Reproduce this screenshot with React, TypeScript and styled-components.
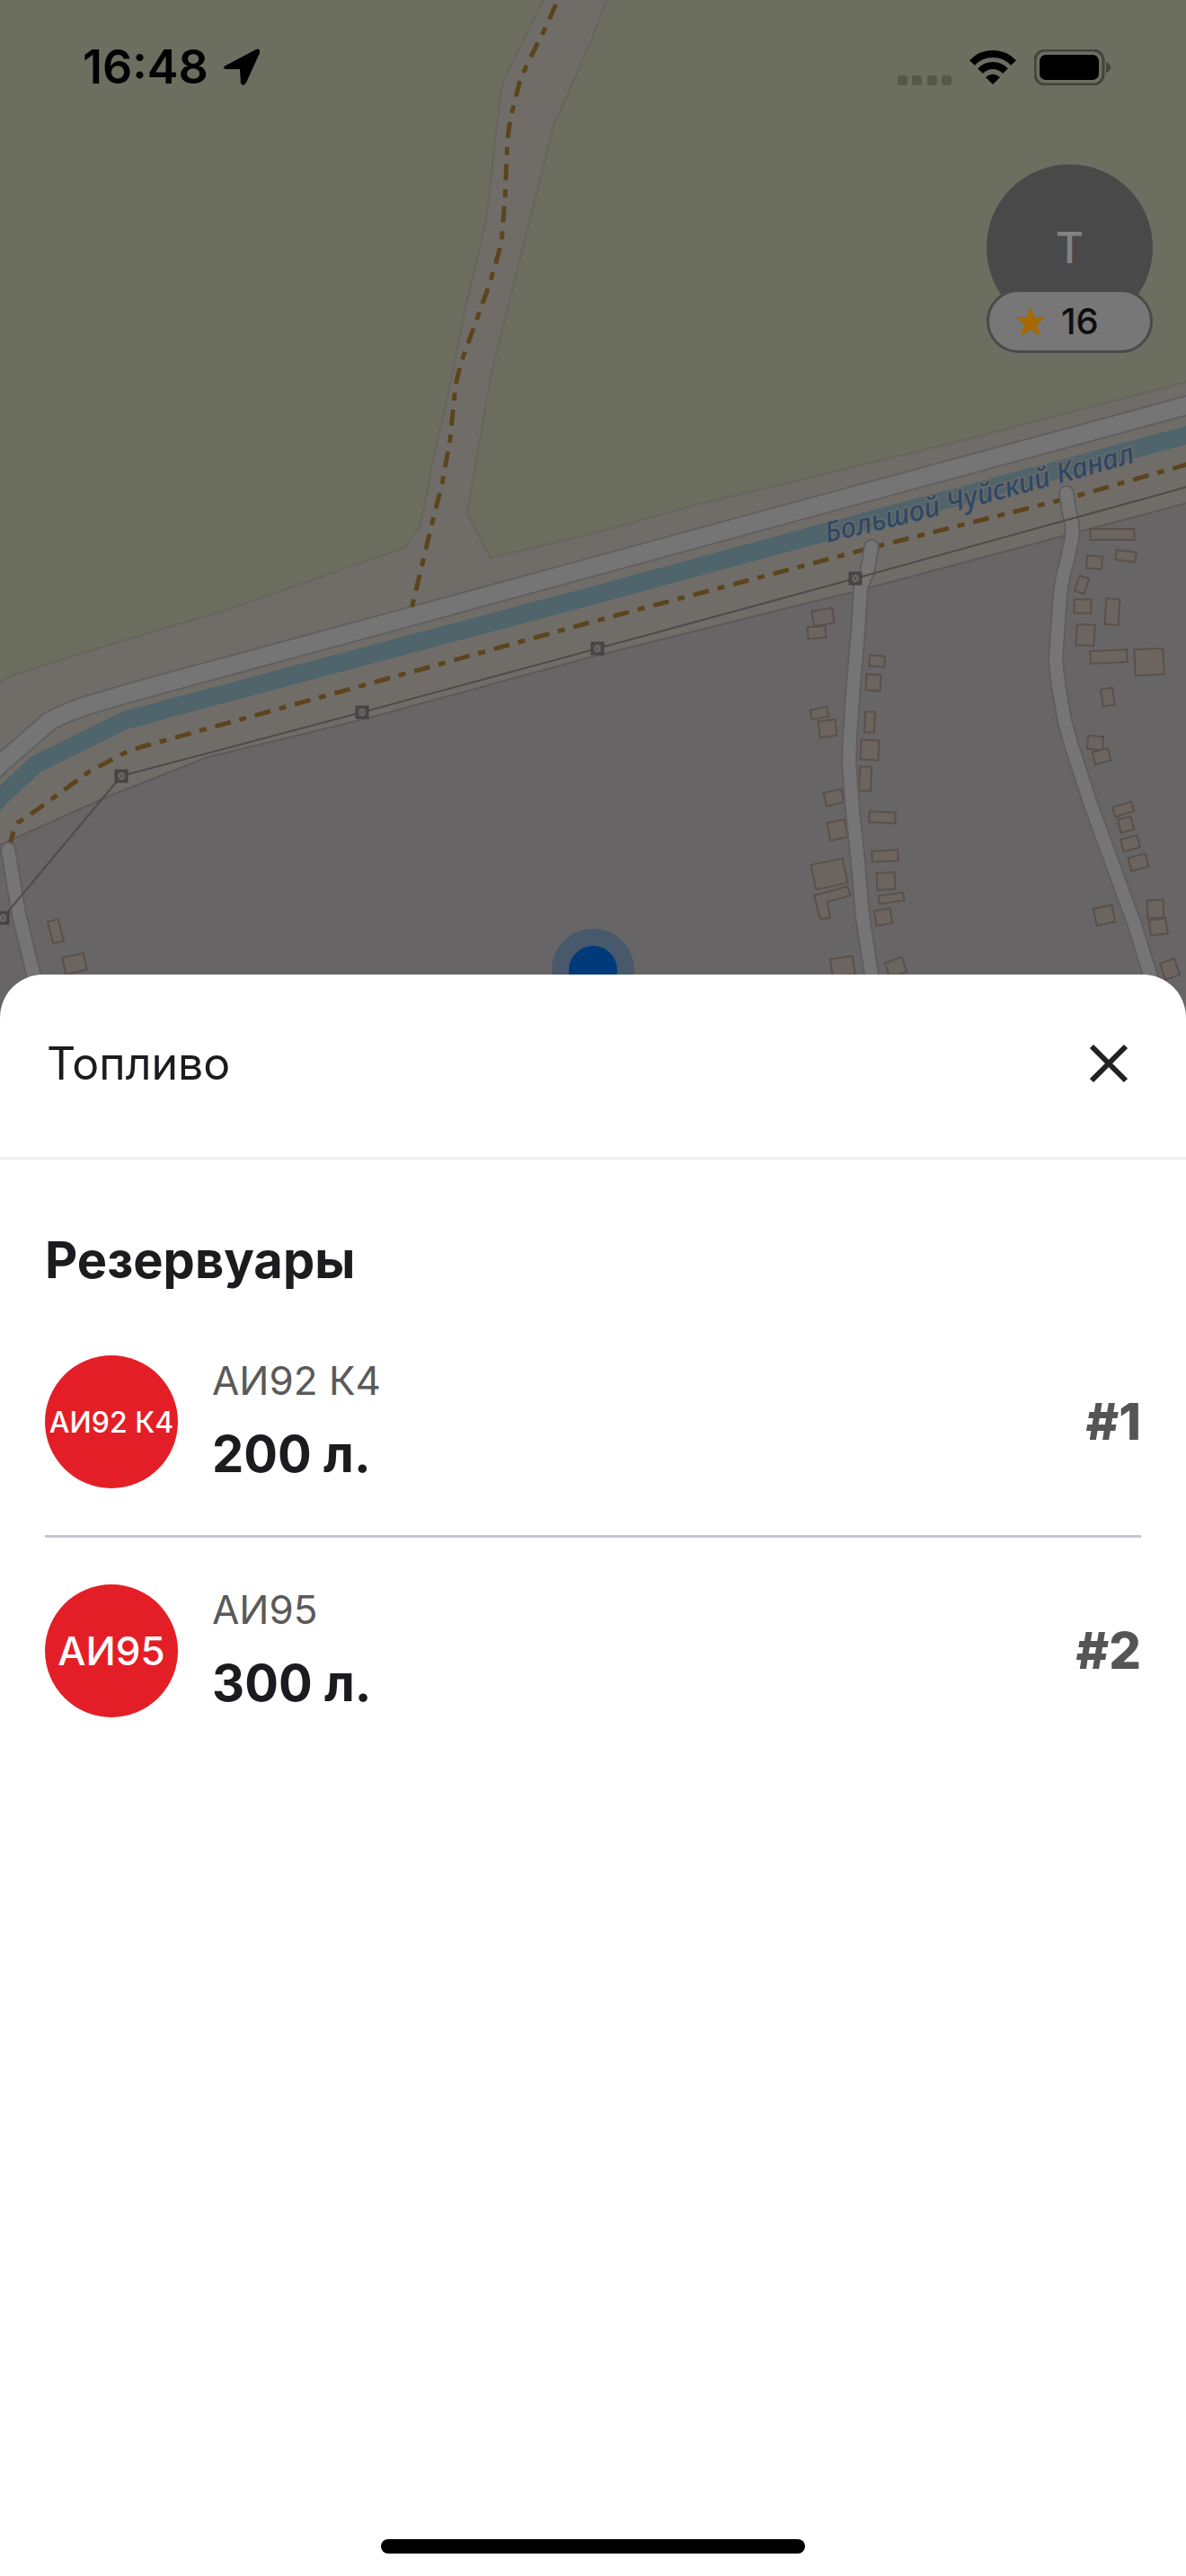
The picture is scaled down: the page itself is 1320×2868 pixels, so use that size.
import React from "react";
import styled, { createGlobalStyle } from "styled-components";

const GlobalStyle = createGlobalStyle`
  *, *::before, *::after { box-sizing: border-box; }
  body {
    margin: 0;
    background: #ffffff;
    font-family: Inter, "Noto Sans", "Liberation Sans", sans-serif;
    color: #1c1b1f;
  }
`;

const Screen = styled.div`
  display: flex;
  flex-direction: column;
  min-height: 100vh;
`;

const MapArea = styled.section`
  position: relative;
  height: 1133px;
  overflow: hidden;
  background: #686566;
`;

const MapCanvas = styled.svg`
  position: absolute;
  inset: 0;
  width: 100%;
  height: 100%;
`;

const Overlay = styled.div`
  position: relative;
  display: flex;
  flex-direction: column;
`;

const StatusBar = styled.header`
  display: flex;
  align-items: center;
  justify-content: space-between;
  height: 150px;
  padding: 0 84px 0 92px;
`;

const StatusGroup = styled.div<{ $gap: number }>`
  display: flex;
  align-items: center;
  gap: ${(p) => p.$gap}px;
`;

const Clock = styled.time`
  font-size: 52px;
  font-weight: 600;
  line-height: 64px;
  color: #000000;
`;

const Profile = styled.button`
  display: flex;
  flex-direction: column;
  align-self: flex-end;
  width: 185px;
  margin: 33px 37px 0 0;
  padding: 0;
  border: 0;
  background: none;
  font-family: inherit;
  cursor: pointer;
`;

const Avatar = styled.span`
  display: flex;
  align-items: center;
  justify-content: center;
  height: 185px;
  border-radius: 50%;
  background: #494949;
  color: #828282;
  font-size: 48px;
  font-weight: 500;
`;

const Rating = styled.span`
  display: flex;
  align-items: center;
  gap: 16px;
  height: 71px;
  margin-top: -46px;
  padding: 0 28px;
  border: 3px solid #4a4a4a;
  border-radius: 36px;
  background: #777777;
  color: #0e0e10;
  font-size: 40px;
  font-weight: 500;
`;

const Sheet = styled.main`
  position: relative;
  display: flex;
  flex: 1;
  flex-direction: column;
  margin-top: -48px;
  border-radius: 48px 48px 0 0;
  background: #ffffff;
`;

const SheetHeader = styled.div`
  display: flex;
  align-items: center;
  justify-content: space-between;
  height: 206px;
  padding: 0 52px 6px;
  border-bottom: 3px solid #f0f0f0;
`;

const SheetTitle = styled.h1`
  margin: 0;
  font-size: 50px;
  font-weight: 400;
  line-height: 64px;
`;

const CloseButton = styled.button`
  display: flex;
  padding: 12px;
  border: 0;
  background: none;
  color: #212121;
  cursor: pointer;
`;

const SheetBody = styled.section`
  flex: 1;
  padding: 76px 50px 0;
`;

const SectionTitle = styled.h2`
  margin: 0 0 18px;
  font-size: 56px;
  font-weight: 700;
  line-height: 72px;
`;

const TankList = styled.ul`
  margin: 0;
  padding: 0;
  list-style: none;
`;

const TankRow = styled.li`
  display: flex;
  align-items: center;
  padding: 50px 0;

  & + & {
    border-top: 3px solid #c8c4ce;
  }
`;

const Badge = styled.span<{ $small?: boolean }>`
  display: flex;
  flex: none;
  align-items: center;
  justify-content: center;
  width: 148px;
  height: 148px;
  margin-right: 38px;
  border-radius: 50%;
  background: #e41e26;
  color: #ffffff;
  font-size: ${(p) => (p.$small ? 32 : 44)}px;
  font-weight: 500;
  white-space: nowrap;
`;

const TankInfo = styled.div`
  display: flex;
  flex: 1;
  flex-direction: column;
  gap: 12px;
`;

const FuelName = styled.span`
  color: #5a5a5a;
  font-size: 44px;
  line-height: 60px;
`;

const Volume = styled.strong`
  font-size: 56px;
  font-weight: 700;
  line-height: 80px;
`;

const TankNumber = styled.span`
  color: #555555;
  font-size: 56px;
  font-weight: 800;
`;

const HomeBar = styled.div`
  align-self: center;
  width: 472px;
  height: 16px;
  margin-bottom: 25px;
  border-radius: 8px;
  background: #000000;
`;

type Building = [number, number, number, number, number];

// centre x, centre y, width, height, rotation
const buildings: Building[] = [
  [1238, 595, 49, 12, 0], [1253, 619, 22, 11, 8], [1218, 626, 17, 14, 4],
  [1204, 651, 11, 18, 20], [1205, 675, 19, 15, 2], [1238, 681, 15, 29, 4],
  [1208, 707, 20, 23, 3], [1234, 731, 41, 14, -3], [1279, 737, 32, 29, -3],
  [916, 687, 23, 17, -10], [909, 704, 20, 13, -5], [976, 736, 17, 12, 5],
  [972, 760, 16, 18, 3], [1233, 776, 13, 19, -8], [1219, 827, 17, 15, 5],
  [1226, 842, 18, 14, -15], [912, 794, 19, 11, -12], [921, 811, 19, 18, -8],
  [968, 804, 11, 23, 3], [968, 835, 20, 22, 3], [963, 867, 13, 27, 3],
  [928, 888, 20, 15, -12], [932, 924, 20, 20, -12], [982, 910, 29, 12, 3],
  [985, 953, 29, 12, -3], [986, 981, 20, 19, -2], [992, 1000, 28, 9, -8],
  [983, 1021, 18, 17, -10], [923, 973, 36, 28, -12], [938, 1078, 25, 24, -8],
  [997, 1077, 20, 17, -20], [1250, 901, 22, 11, -18], [1253, 918, 15, 15, -15],
  [1258, 939, 19, 14, -15], [1267, 960, 20, 15, -15], [1229, 1019, 21, 19, -12],
  [1286, 1012, 18, 20, -3], [1289, 1032, 19, 17, -8], [1302, 1079, 17, 19, -20],
  [62, 1037, 12, 25, -15], [83, 1073, 24, 19, -12],
];

const poles = [[3, 1022], [135, 864], [403, 793], [665, 722], [952, 644]];

const highway = "M-10 861 L0 851 L55 803 Q76 792 101 784 L160 767 L455 687 L660 631 L880 571 L1330 449";
const streets = [
  "M970 609 L965 637 L958 653 L955 703 L950 760 L946 820 L945 850 L949 903 L955 960 L960 1020 L970 1085 L979 1140",
  "M1187 549 L1190 570 Q1196 590 1192 604 L1187 627 Q1180 650 1179 675 L1175 735 L1178 763 L1185 803 L1192 828 L1213 893 L1240 967 L1263 1030 L1280 1085 L1298 1140",
  "M9 946 L21 1018 L38 1088 L52 1140",
];

function StreetMap() {
  return (
    <MapCanvas viewBox="0 0 1320 1133" preserveAspectRatio="xMidYMin slice" role="img" aria-label="Карта">
      <rect width="1320" height="1133" fill="#706d69" />
      <g fill="#6c6e60" stroke="#65655d" strokeWidth="2">
        <path d="M-5 -5 H607 L562 86 L557 104 L550 168 L541 246 L518 343 L501 429 L480 521 L476 547 L467 586 L450 610 L252 679 L118 719 L13 752 L-5 762Z" />
        <path d="M677 -5 L660 40 L631 107 L617 137 L593 232 L547 414 L522 560 L520 572 L546 621 L660 594 L778 561 L880 537 L1080 488 L1325 424 V-5Z" />
      </g>
      <path d="M-5 943 L122 886 L231 843 L404 801 L660 731 L880 676 L950 659 L1325 559 V1140 H-5Z" fill="#686566" stroke="#5c595a" strokeWidth="2" />
      <g fill="none">
        <path d={highway} stroke="#625f61" strokeWidth="23" />
        <path d={highway} stroke="#757575" strokeWidth="19" />
        <path d="M-10 899 L0 888 L40 851 L139 802 L337 749 L660 663 L880 603 L1330 482" stroke="#4f646b" strokeWidth="20" />
        <g stroke="#5c451d" strokeWidth="5">
          <path d="M623 -5 L610 25 L587 71 L579 89 L568 132 L565 154 L562 221 L558 271 L545 316 L513 404 L507 429 L501 489 L492 539 L480 586 L458 678" strokeDasharray="18 10 9 10" strokeDashoffset="36" />
          <path d="M10 943 L15 926 L20 916 L42 901 L98 860 L139 838 L156 832 L660 692 L969 610 L1195 553 L1325 516" strokeDasharray="18 10 8 10" />
        </g>
      </g>
      <g fill="#6c645f" stroke="#5a504b" strokeWidth="2">
        {buildings.map(([x, y, w, h, r]) => (
          <rect key={`${x}-${y}`} x={x - w / 2} y={y - h / 2} width={w} height={h} transform={`rotate(${r} ${x} ${y})`} />
        ))}
        <path d="M906 997 L943 987 L947 997 L921 1004 L924 1022 L913 1023Z" />
      </g>
      <g fill="none" strokeLinecap="round" strokeLinejoin="round">
        {streets.map((d) => <path key={d} d={d} stroke="#5f5d5e" strokeWidth="18" />)}
        {streets.map((d) => <path key={d} d={d} stroke="#757575" strokeWidth="14" />)}
      </g>
      <path d="M3 1022 L135 864 L403 793 L665 722 L952 644 L1325 541" fill="none" stroke="#4e4b4c" strokeWidth="2" />
      {poles.map(([x, y]) => (
        <g key={x}>
          <rect x={x - 6} y={y - 6} width="12" height="12" fill="#555353" stroke="#454343" strokeWidth="3" />
          <path d={`M${x} ${y - 4} l3 4 l-3 4 l-3 -4Z`} fill="none" stroke="#808080" strokeWidth="1" />
        </g>
      ))}
      <path id="canal-name" d="M921 604 Q1088 565 1275 511" fill="none" />
      <text fontFamily="'Noto Sans', 'Open Sans', sans-serif" fontStyle="italic" fontWeight="500" fontSize="31" fill="#2d4866" stroke="#6d6a68" strokeWidth="3" paintOrder="stroke">
        <textPath href="#canal-name">Большой Чуйский Канал</textPath>
      </text>
      <circle cx="660" cy="1080" r="46" fill="#48596c" />
      <circle cx="660" cy="1080" r="27" fill="#003a7a" />
    </MapCanvas>
  );
}

const LocationIcon = () => (
  <svg width="42" height="42" viewBox="0 0 42 42" aria-hidden="true">
    <path d="M3 19 L37 1 Q42 -1 41 5 L26 38 Q23 43 20 39 L19 23 L4 23 Q-2 22 3 19Z" fill="#000" />
  </svg>
);

const SignalIcon = () => (
  <svg width="60" height="40" viewBox="0 0 60 40" aria-hidden="true">
    {[0, 16, 33, 49].map((x) => <rect key={x} x={x} y="29" width="11" height="11" rx="3" fill="#55574b" />)}
  </svg>
);

const WifiIcon = () => (
  <svg width="52" height="40" viewBox="0 0 52 40" aria-hidden="true">
    <g fill="none" stroke="#000" strokeWidth="8">
      <path d="M3 15 Q12 5 26 5 Q40 5 49 15" />
      <path d="M12 24 Q18 18 26 18 Q34 18 40 24" />
    </g>
    <path d="M18 31 Q26 24 34 31 L26 39Z" fill="#000" />
  </svg>
);

const BatteryIcon = () => (
  <svg width="85" height="40" viewBox="0 0 85 40" aria-hidden="true">
    <rect x="1" y="1" width="76" height="38" rx="11" fill="none" stroke="#43443b" strokeWidth="3" />
    <rect x="6" y="6" width="66" height="28" rx="7" fill="#000" />
    <path d="M80 14 Q85 16 85 20 Q85 24 80 26Z" fill="#43443b" />
  </svg>
);

const StarIcon = () => (
  <svg width="36" height="36" viewBox="0 0 36 36" aria-hidden="true">
    <path d="M18 1 L22 13 L35 13 L25 21 L29 34 L18 27 L7 34 L11 21 L1 13 L14 13Z" fill="#a66900" />
  </svg>
);

const CloseIcon = () => (
  <svg width="44" height="44" viewBox="0 0 44 44" aria-hidden="true">
    <path d="M3 3 L41 41 M41 3 L3 41" stroke="currentColor" strokeWidth="6" />
  </svg>
);

const tanks = [
  { number: 1, fuel: "АИ92 К4", volume: 200, smallBadge: true },
  { number: 2, fuel: "АИ95", volume: 300, smallBadge: false },
];

export default function App() {
  return (
    <Screen>
      <GlobalStyle />
      <MapArea>
        <StreetMap />
        <Overlay>
          <StatusBar>
            <StatusGroup $gap={16}>
              <Clock>16:48</Clock>
              <LocationIcon />
            </StatusGroup>
            <StatusGroup $gap={20}>
              <SignalIcon />
              <WifiIcon />
              <BatteryIcon />
            </StatusGroup>
          </StatusBar>
          <Profile type="button">
            <Avatar>Т</Avatar>
            <Rating>
              <StarIcon />
              16
            </Rating>
          </Profile>
        </Overlay>
      </MapArea>
      <Sheet>
        <SheetHeader>
          <SheetTitle>Топливо</SheetTitle>
          <CloseButton type="button" aria-label="Закрыть">
            <CloseIcon />
          </CloseButton>
        </SheetHeader>
        <SheetBody>
          <SectionTitle>Резервуары</SectionTitle>
          <TankList>
            {tanks.map((tank) => (
              <TankRow key={tank.number}>
                <Badge $small={tank.smallBadge}>{tank.fuel}</Badge>
                <TankInfo>
                  <FuelName>{tank.fuel}</FuelName>
                  <Volume>{tank.volume} л.</Volume>
                </TankInfo>
                <TankNumber>#{tank.number}</TankNumber>
              </TankRow>
            ))}
          </TankList>
        </SheetBody>
        <HomeBar />
      </Sheet>
    </Screen>
  );
}
